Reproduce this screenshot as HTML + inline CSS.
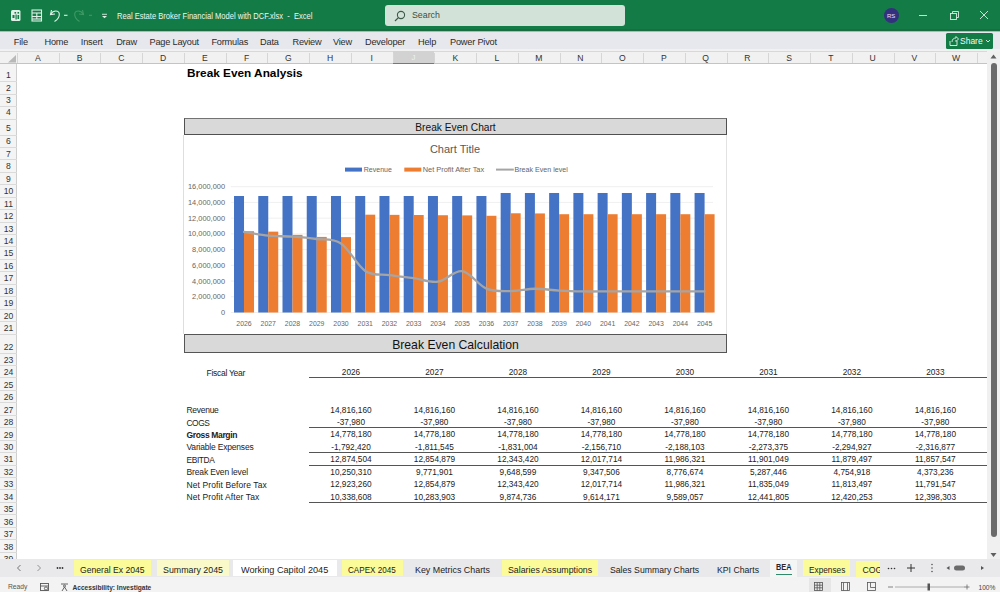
<!DOCTYPE html><html><head><meta charset="utf-8"><title>Excel</title><style>
*{box-sizing:border-box;margin:0;padding:0}
html,body{width:1000px;height:592px;overflow:hidden;background:#fff;font-family:"Liberation Sans", sans-serif;position:relative}
.a{position:absolute;white-space:nowrap}
.t{position:absolute;white-space:nowrap;line-height:1}
</style></head><body>
<div class="a" style="left:0;top:0;width:1000px;height:31px;background:#137b45"></div>
<svg class="a" style="left:0;top:0" width="120" height="31" viewBox="0 0 120 31">
<rect x="11" y="10" width="9.5" height="11" rx="1.5" fill="#dff0e6"/>
<rect x="14.5" y="12" width="1.6" height="1.6" fill="#137b45"/><rect x="17.5" y="12" width="1.6" height="1.6" fill="#137b45"/>
<rect x="12.5" y="15" width="2" height="3" fill="#137b45"/><rect x="15.5" y="14.5" width="1.2" height="5" fill="#137b45"/><rect x="17.5" y="15" width="1.6" height="4" fill="#137b45"/>
<g fill="none" stroke="#dff0e6" stroke-width="1.1">
<rect x="32" y="10" width="9.5" height="11"/>
<line x1="32" y1="13" x2="41.5" y2="13"/><line x1="32" y1="16.5" x2="41.5" y2="16.5"/><line x1="32" y1="19" x2="41.5" y2="19"/><line x1="36.8" y1="13" x2="36.8" y2="19"/>
<path d="M51.5 10 L50.5 14.5 L55 14"/><path d="M51 14 C53 10 59 10 59.3 14 C59.5 17 57 20 54.5 21.5"/>
<line x1="64" y1="15.3" x2="67.5" y2="15.3"/>
</g>
<g fill="none" stroke="#3d9a66" stroke-width="1.1">
<path d="M82.5 10 L83.5 14.5 L79 14"/><path d="M83 14 C81 10 75 10 74.7 14 C74.5 17 77 20 79.5 21.5"/>
<line x1="89" y1="15.3" x2="92" y2="15.3"/>
</g>
<g fill="#dff0e6"><rect x="102" y="13.8" width="5" height="0.9"/><path d="M102 16 L107 16 L104.5 18.3 Z"/></g>
</svg>
<div class="t" style="left:116.5px;top:11.5px;font-size:8.8px;color:#eef6f1;transform:scaleX(0.86);transform-origin:0 0">Real Estate Broker Financial Model with DCF.xlsx &nbsp;- &nbsp;Excel</div>
<div class="a" style="left:385px;top:5px;width:240px;height:21px;background:#d3e2d8;border-radius:3px"></div>
<svg class="a" style="left:393px;top:9px" width="14" height="14" viewBox="0 0 14 14"><circle cx="8" cy="6" r="3.6" fill="none" stroke="#3c5a48" stroke-width="1.1"/><line x1="5.4" y1="8.6" x2="2" y2="12" stroke="#3c5a48" stroke-width="1.2"/></svg>
<div class="t" style="left:412px;top:11px;font-size:8.8px;color:#3a4f42">Search</div>
<div class="a" style="left:884px;top:8px;width:15px;height:15px;border-radius:50%;background:#33307f"></div>
<div class="t" style="left:887px;top:12.5px;font-size:6px;color:#e6e0ff">RS</div>
<svg class="a" style="left:910px;top:0" width="90" height="31" viewBox="0 0 90 31">
<g fill="none" stroke="#d9ebe0" stroke-width="0.9">
<line x1="9" y1="15.5" x2="17" y2="15.5"/>
<rect x="40.5" y="13.5" width="6" height="6"/><path d="M42.5 13.5 V11.5 H48.5 V17.5 H46.5"/>
<line x1="70" y1="11" x2="78" y2="19"/><line x1="78" y1="11" x2="70" y2="19"/>
</g></svg>
<div class="a" style="left:0;top:29px;width:1000px;height:2px;background:#1d6b40"></div>
<div class="a" style="left:0;top:31px;width:1000px;height:18px;background:#e7e8ed"></div>
<div class="a" style="left:0;top:30.6px;width:1000px;height:1px;background:#8fcca4"></div>
<div class="t" style="left:13.8px;top:37.5px;width:12.2px;font-size:9.2px;color:#2b2b2b;text-align:center;letter-spacing:-0.2px">File</div>
<div class="t" style="left:44.5px;top:37.5px;width:23.5px;font-size:9.2px;color:#2b2b2b;text-align:center;letter-spacing:-0.2px">Home</div>
<div class="t" style="left:80.5px;top:37.5px;width:22.5px;font-size:9.2px;color:#2b2b2b;text-align:center;letter-spacing:-0.2px">Insert</div>
<div class="t" style="left:116px;top:37.5px;width:21px;font-size:9.2px;color:#2b2b2b;text-align:center;letter-spacing:-0.2px">Draw</div>
<div class="t" style="left:149.5px;top:37.5px;width:48.5px;font-size:9.2px;color:#2b2b2b;text-align:center;letter-spacing:-0.2px">Page Layout</div>
<div class="t" style="left:211.4px;top:37.5px;width:36.0px;font-size:9.2px;color:#2b2b2b;text-align:center;letter-spacing:-0.2px">Formulas</div>
<div class="t" style="left:260px;top:37.5px;width:18.69999999999999px;font-size:9.2px;color:#2b2b2b;text-align:center;letter-spacing:-0.2px">Data</div>
<div class="t" style="left:292.5px;top:37.5px;width:27.0px;font-size:9.2px;color:#2b2b2b;text-align:center;letter-spacing:-0.2px">Review</div>
<div class="t" style="left:333px;top:37.5px;width:18.600000000000023px;font-size:9.2px;color:#2b2b2b;text-align:center;letter-spacing:-0.2px">View</div>
<div class="t" style="left:365px;top:37.5px;width:39.80000000000001px;font-size:9.2px;color:#2b2b2b;text-align:center;letter-spacing:-0.2px">Developer</div>
<div class="t" style="left:418px;top:37.5px;width:17.69999999999999px;font-size:9.2px;color:#2b2b2b;text-align:center;letter-spacing:-0.2px">Help</div>
<div class="t" style="left:450px;top:37.5px;width:45.80000000000001px;font-size:9.2px;color:#2b2b2b;text-align:center;letter-spacing:-0.2px">Power Pivot</div>
<div class="a" style="left:946px;top:33px;width:47px;height:16px;background:#137b45;border-radius:1.5px"></div>
<svg class="a" style="left:946px;top:33px" width="47" height="16" viewBox="0 0 47 16"><g fill="none" stroke="#e8f2ec" stroke-width="0.9"><path d="M4 8 V12.5 H11 V8"/><path d="M6 9 C6 6 8 5 10 5 L10 3.5 L12.5 6 L10 8.5 L10 7"/><path d="M40 7 L42 9 L44 7"/></g></svg>
<div class="t" style="left:960px;top:37px;font-size:8.5px;color:#f4faf6">Share</div>
<div class="a" style="left:0;top:49px;width:1000px;height:15px;background:#f1f1f1;border-bottom:1px solid #c4c4c4"></div>
<div class="a" style="left:0;top:50.5px;width:1000px;height:1px;background:#d8d8da"></div>
<svg class="a" style="left:0;top:51px" width="17" height="12"><path d="M8 11.5 L16 11.5 L16 4 Z" fill="#b8b8b8"/></svg>
<div class="t" style="left:17.00px;top:53.6px;width:41.74px;text-align:center;font-size:8.6px;color:#333">A</div>
<div class="a" style="left:17.00px;top:53px;width:1px;height:10px;background:#d6d6d6"></div>
<div class="t" style="left:58.74px;top:53.6px;width:41.74px;text-align:center;font-size:8.6px;color:#333">B</div>
<div class="a" style="left:58.74px;top:53px;width:1px;height:10px;background:#d6d6d6"></div>
<div class="t" style="left:100.48px;top:53.6px;width:41.74px;text-align:center;font-size:8.6px;color:#333">C</div>
<div class="a" style="left:100.48px;top:53px;width:1px;height:10px;background:#d6d6d6"></div>
<div class="t" style="left:142.22px;top:53.6px;width:41.74px;text-align:center;font-size:8.6px;color:#333">D</div>
<div class="a" style="left:142.22px;top:53px;width:1px;height:10px;background:#d6d6d6"></div>
<div class="t" style="left:183.96px;top:53.6px;width:41.74px;text-align:center;font-size:8.6px;color:#333">E</div>
<div class="a" style="left:183.96px;top:53px;width:1px;height:10px;background:#d6d6d6"></div>
<div class="t" style="left:225.70px;top:53.6px;width:41.74px;text-align:center;font-size:8.6px;color:#333">F</div>
<div class="a" style="left:225.70px;top:53px;width:1px;height:10px;background:#d6d6d6"></div>
<div class="t" style="left:267.44px;top:53.6px;width:41.74px;text-align:center;font-size:8.6px;color:#333">G</div>
<div class="a" style="left:267.44px;top:53px;width:1px;height:10px;background:#d6d6d6"></div>
<div class="t" style="left:309.18px;top:53.6px;width:41.74px;text-align:center;font-size:8.6px;color:#333">H</div>
<div class="a" style="left:309.18px;top:53px;width:1px;height:10px;background:#d6d6d6"></div>
<div class="t" style="left:350.92px;top:53.6px;width:41.74px;text-align:center;font-size:8.6px;color:#333">I</div>
<div class="a" style="left:350.92px;top:53px;width:1px;height:10px;background:#d6d6d6"></div>
<div class="a" style="left:392.66px;top:51px;width:41.74px;height:13px;background:#d2d2d2;border-bottom:1.5px solid #3f9a62"></div>
<div class="t" style="left:392.66px;top:53.5px;width:41.74px;text-align:center;font-size:7.8px;color:#e9f3ec">J</div>
<div class="a" style="left:392.66px;top:53px;width:1px;height:10px;background:#d6d6d6"></div>
<div class="t" style="left:434.40px;top:53.6px;width:41.74px;text-align:center;font-size:8.6px;color:#333">K</div>
<div class="a" style="left:434.40px;top:53px;width:1px;height:10px;background:#d6d6d6"></div>
<div class="t" style="left:476.14px;top:53.6px;width:41.74px;text-align:center;font-size:8.6px;color:#333">L</div>
<div class="a" style="left:476.14px;top:53px;width:1px;height:10px;background:#d6d6d6"></div>
<div class="t" style="left:517.88px;top:53.6px;width:41.74px;text-align:center;font-size:8.6px;color:#333">M</div>
<div class="a" style="left:517.88px;top:53px;width:1px;height:10px;background:#d6d6d6"></div>
<div class="t" style="left:559.62px;top:53.6px;width:41.74px;text-align:center;font-size:8.6px;color:#333">N</div>
<div class="a" style="left:559.62px;top:53px;width:1px;height:10px;background:#d6d6d6"></div>
<div class="t" style="left:601.36px;top:53.6px;width:41.74px;text-align:center;font-size:8.6px;color:#333">O</div>
<div class="a" style="left:601.36px;top:53px;width:1px;height:10px;background:#d6d6d6"></div>
<div class="t" style="left:643.10px;top:53.6px;width:41.74px;text-align:center;font-size:8.6px;color:#333">P</div>
<div class="a" style="left:643.10px;top:53px;width:1px;height:10px;background:#d6d6d6"></div>
<div class="t" style="left:684.84px;top:53.6px;width:41.74px;text-align:center;font-size:8.6px;color:#333">Q</div>
<div class="a" style="left:684.84px;top:53px;width:1px;height:10px;background:#d6d6d6"></div>
<div class="t" style="left:726.58px;top:53.6px;width:41.74px;text-align:center;font-size:8.6px;color:#333">R</div>
<div class="a" style="left:726.58px;top:53px;width:1px;height:10px;background:#d6d6d6"></div>
<div class="t" style="left:768.32px;top:53.6px;width:41.74px;text-align:center;font-size:8.6px;color:#333">S</div>
<div class="a" style="left:768.32px;top:53px;width:1px;height:10px;background:#d6d6d6"></div>
<div class="t" style="left:810.06px;top:53.6px;width:41.74px;text-align:center;font-size:8.6px;color:#333">T</div>
<div class="a" style="left:810.06px;top:53px;width:1px;height:10px;background:#d6d6d6"></div>
<div class="t" style="left:851.80px;top:53.6px;width:41.74px;text-align:center;font-size:8.6px;color:#333">U</div>
<div class="a" style="left:851.80px;top:53px;width:1px;height:10px;background:#d6d6d6"></div>
<div class="t" style="left:893.54px;top:53.6px;width:41.74px;text-align:center;font-size:8.6px;color:#333">V</div>
<div class="a" style="left:893.54px;top:53px;width:1px;height:10px;background:#d6d6d6"></div>
<div class="t" style="left:935.28px;top:53.6px;width:41.74px;text-align:center;font-size:8.6px;color:#333">W</div>
<div class="a" style="left:935.28px;top:53px;width:1px;height:10px;background:#d6d6d6"></div>
<div class="a" style="left:977.02px;top:53px;width:1px;height:10px;background:#d6d6d6"></div>
<div class="a" style="left:0;top:64px;width:17px;height:495px;background:#f4f4f4;border-right:1px solid #cfcfcf"></div>
<div class="t" style="left:0;top:71.00px;width:17px;text-align:center;font-size:8.6px;color:#333">1</div>
<div class="a" style="left:0;top:80.50px;width:17px;height:1px;background:#dadada"></div>
<div class="t" style="left:0;top:83.60px;width:17px;text-align:center;font-size:8.6px;color:#333">2</div>
<div class="a" style="left:0;top:94.00px;width:17px;height:1px;background:#dadada"></div>
<div class="t" style="left:0;top:95.60px;width:17px;text-align:center;font-size:8.6px;color:#333">3</div>
<div class="a" style="left:0;top:106.00px;width:17px;height:1px;background:#dadada"></div>
<div class="t" style="left:0;top:108.10px;width:17px;text-align:center;font-size:8.6px;color:#333">4</div>
<div class="a" style="left:0;top:118.50px;width:17px;height:1px;background:#dadada"></div>
<div class="t" style="left:0;top:124.10px;width:17px;text-align:center;font-size:8.6px;color:#333">5</div>
<div class="a" style="left:0;top:134.50px;width:17px;height:1px;background:#dadada"></div>
<div class="t" style="left:0;top:137.40px;width:17px;text-align:center;font-size:8.6px;color:#333">6</div>
<div class="a" style="left:0;top:146.80px;width:17px;height:1px;background:#dadada"></div>
<div class="t" style="left:0;top:149.85px;width:17px;text-align:center;font-size:8.6px;color:#333">7</div>
<div class="a" style="left:0;top:159.25px;width:17px;height:1px;background:#dadada"></div>
<div class="t" style="left:0;top:162.30px;width:17px;text-align:center;font-size:8.6px;color:#333">8</div>
<div class="a" style="left:0;top:171.70px;width:17px;height:1px;background:#dadada"></div>
<div class="t" style="left:0;top:174.75px;width:17px;text-align:center;font-size:8.6px;color:#333">9</div>
<div class="a" style="left:0;top:184.15px;width:17px;height:1px;background:#dadada"></div>
<div class="t" style="left:0;top:187.20px;width:17px;text-align:center;font-size:8.6px;color:#333">10</div>
<div class="a" style="left:0;top:196.60px;width:17px;height:1px;background:#dadada"></div>
<div class="t" style="left:0;top:199.65px;width:17px;text-align:center;font-size:8.6px;color:#333">11</div>
<div class="a" style="left:0;top:209.05px;width:17px;height:1px;background:#dadada"></div>
<div class="t" style="left:0;top:212.10px;width:17px;text-align:center;font-size:8.6px;color:#333">12</div>
<div class="a" style="left:0;top:221.50px;width:17px;height:1px;background:#dadada"></div>
<div class="t" style="left:0;top:224.55px;width:17px;text-align:center;font-size:8.6px;color:#333">13</div>
<div class="a" style="left:0;top:233.95px;width:17px;height:1px;background:#dadada"></div>
<div class="t" style="left:0;top:237.00px;width:17px;text-align:center;font-size:8.6px;color:#333">14</div>
<div class="a" style="left:0;top:246.40px;width:17px;height:1px;background:#dadada"></div>
<div class="t" style="left:0;top:249.45px;width:17px;text-align:center;font-size:8.6px;color:#333">15</div>
<div class="a" style="left:0;top:258.85px;width:17px;height:1px;background:#dadada"></div>
<div class="t" style="left:0;top:261.90px;width:17px;text-align:center;font-size:8.6px;color:#333">16</div>
<div class="a" style="left:0;top:271.30px;width:17px;height:1px;background:#dadada"></div>
<div class="t" style="left:0;top:274.35px;width:17px;text-align:center;font-size:8.6px;color:#333">17</div>
<div class="a" style="left:0;top:283.75px;width:17px;height:1px;background:#dadada"></div>
<div class="t" style="left:0;top:286.80px;width:17px;text-align:center;font-size:8.6px;color:#333">18</div>
<div class="a" style="left:0;top:296.20px;width:17px;height:1px;background:#dadada"></div>
<div class="t" style="left:0;top:299.25px;width:17px;text-align:center;font-size:8.6px;color:#333">19</div>
<div class="a" style="left:0;top:308.65px;width:17px;height:1px;background:#dadada"></div>
<div class="t" style="left:0;top:311.70px;width:17px;text-align:center;font-size:8.6px;color:#333">20</div>
<div class="a" style="left:0;top:321.10px;width:17px;height:1px;background:#dadada"></div>
<div class="t" style="left:0;top:324.10px;width:17px;text-align:center;font-size:8.6px;color:#333">21</div>
<div class="a" style="left:0;top:333.50px;width:17px;height:1px;background:#dadada"></div>
<div class="t" style="left:0;top:343.10px;width:17px;text-align:center;font-size:8.6px;color:#333">22</div>
<div class="a" style="left:0;top:352.50px;width:17px;height:1px;background:#dadada"></div>
<div class="t" style="left:0;top:355.85px;width:17px;text-align:center;font-size:8.6px;color:#333">23</div>
<div class="a" style="left:0;top:364.95px;width:17px;height:1px;background:#dadada"></div>
<div class="t" style="left:0;top:368.30px;width:17px;text-align:center;font-size:8.6px;color:#333">24</div>
<div class="a" style="left:0;top:377.40px;width:17px;height:1px;background:#dadada"></div>
<div class="t" style="left:0;top:380.75px;width:17px;text-align:center;font-size:8.6px;color:#333">25</div>
<div class="a" style="left:0;top:389.85px;width:17px;height:1px;background:#dadada"></div>
<div class="t" style="left:0;top:393.20px;width:17px;text-align:center;font-size:8.6px;color:#333">26</div>
<div class="a" style="left:0;top:402.30px;width:17px;height:1px;background:#dadada"></div>
<div class="t" style="left:0;top:405.65px;width:17px;text-align:center;font-size:8.6px;color:#333">27</div>
<div class="a" style="left:0;top:414.75px;width:17px;height:1px;background:#dadada"></div>
<div class="t" style="left:0;top:418.10px;width:17px;text-align:center;font-size:8.6px;color:#333">28</div>
<div class="a" style="left:0;top:427.20px;width:17px;height:1px;background:#dadada"></div>
<div class="t" style="left:0;top:430.55px;width:17px;text-align:center;font-size:8.6px;color:#333">29</div>
<div class="a" style="left:0;top:439.65px;width:17px;height:1px;background:#dadada"></div>
<div class="t" style="left:0;top:443.00px;width:17px;text-align:center;font-size:8.6px;color:#333">30</div>
<div class="a" style="left:0;top:452.10px;width:17px;height:1px;background:#dadada"></div>
<div class="t" style="left:0;top:455.45px;width:17px;text-align:center;font-size:8.6px;color:#333">31</div>
<div class="a" style="left:0;top:464.55px;width:17px;height:1px;background:#dadada"></div>
<div class="t" style="left:0;top:467.90px;width:17px;text-align:center;font-size:8.6px;color:#333">32</div>
<div class="a" style="left:0;top:477.00px;width:17px;height:1px;background:#dadada"></div>
<div class="t" style="left:0;top:480.35px;width:17px;text-align:center;font-size:8.6px;color:#333">33</div>
<div class="a" style="left:0;top:489.45px;width:17px;height:1px;background:#dadada"></div>
<div class="t" style="left:0;top:492.80px;width:17px;text-align:center;font-size:8.6px;color:#333">34</div>
<div class="a" style="left:0;top:501.90px;width:17px;height:1px;background:#dadada"></div>
<div class="t" style="left:0;top:505.25px;width:17px;text-align:center;font-size:8.6px;color:#333">35</div>
<div class="a" style="left:0;top:514.35px;width:17px;height:1px;background:#dadada"></div>
<div class="t" style="left:0;top:517.70px;width:17px;text-align:center;font-size:8.6px;color:#333">36</div>
<div class="a" style="left:0;top:526.80px;width:17px;height:1px;background:#dadada"></div>
<div class="t" style="left:0;top:530.15px;width:17px;text-align:center;font-size:8.6px;color:#333">37</div>
<div class="a" style="left:0;top:539.25px;width:17px;height:1px;background:#dadada"></div>
<div class="t" style="left:0;top:542.60px;width:17px;text-align:center;font-size:8.6px;color:#333">38</div>
<div class="a" style="left:0;top:551.70px;width:17px;height:1px;background:#dadada"></div>
<div class="t" style="left:0;top:555.05px;width:17px;text-align:center;font-size:8.6px;color:#333">39</div>
<div class="t" style="left:187px;top:68px;font-size:11.8px;font-weight:bold;color:#000">Break Even Analysis</div>
<div class="a" style="left:184px;top:118.2px;width:543px;height:16.9px;background:#d9d9d9;border:1px solid #505050;border-top:1.6px solid #737373;border-bottom-width:1.3px"></div>
<div class="t" style="left:184px;top:122.7px;width:543px;text-align:center;font-size:10.2px;color:#111">Break Even Chart</div>
<div class="a" style="left:183.3px;top:135px;width:544px;height:199px;border-left:1px solid #dedede;border-right:1px solid #e2e2e2"></div>
<svg class="a" style="left:0;top:0" width="1000" height="592" viewBox="0 0 1000 592">
<line x1="230.9" y1="312.50" x2="713" y2="312.50" stroke="#ebebeb" stroke-width="0.8"/>
<text x="225" y="315.10" text-anchor="end" font-size="7.4" fill="#666" font-family='"Liberation Sans"'>0</text>
<line x1="230.9" y1="296.77" x2="713" y2="296.77" stroke="#ebebeb" stroke-width="0.8"/>
<text x="225" y="299.38" text-anchor="end" font-size="7.4" fill="#666" font-family='"Liberation Sans"'>2,000,000</text>
<line x1="230.9" y1="281.05" x2="713" y2="281.05" stroke="#ebebeb" stroke-width="0.8"/>
<text x="225" y="283.65" text-anchor="end" font-size="7.4" fill="#666" font-family='"Liberation Sans"'>4,000,000</text>
<line x1="230.9" y1="265.32" x2="713" y2="265.32" stroke="#ebebeb" stroke-width="0.8"/>
<text x="225" y="267.93" text-anchor="end" font-size="7.4" fill="#666" font-family='"Liberation Sans"'>6,000,000</text>
<line x1="230.9" y1="249.60" x2="713" y2="249.60" stroke="#ebebeb" stroke-width="0.8"/>
<text x="225" y="252.20" text-anchor="end" font-size="7.4" fill="#666" font-family='"Liberation Sans"'>8,000,000</text>
<line x1="230.9" y1="233.88" x2="713" y2="233.88" stroke="#ebebeb" stroke-width="0.8"/>
<text x="225" y="236.47" text-anchor="end" font-size="7.4" fill="#666" font-family='"Liberation Sans"'>10,000,000</text>
<line x1="230.9" y1="218.15" x2="713" y2="218.15" stroke="#ebebeb" stroke-width="0.8"/>
<text x="225" y="220.75" text-anchor="end" font-size="7.4" fill="#666" font-family='"Liberation Sans"'>12,000,000</text>
<line x1="230.9" y1="202.43" x2="713" y2="202.43" stroke="#ebebeb" stroke-width="0.8"/>
<text x="225" y="205.03" text-anchor="end" font-size="7.4" fill="#666" font-family='"Liberation Sans"'>14,000,000</text>
<line x1="230.9" y1="186.70" x2="713" y2="186.70" stroke="#ebebeb" stroke-width="0.8"/>
<text x="225" y="189.30" text-anchor="end" font-size="7.4" fill="#666" font-family='"Liberation Sans"'>16,000,000</text>
<rect x="234.02" y="196.01" width="10.0" height="116.49" fill="#4472c4"/>
<rect x="244.02" y="231.21" width="10.0" height="81.29" fill="#ed7d31"/>
<text x="244.02" y="326.10" text-anchor="middle" font-size="6.9" fill="#666" font-family='"Liberation Sans"'>2026</text>
<rect x="258.26" y="196.01" width="10.0" height="116.49" fill="#4472c4"/>
<rect x="268.26" y="231.64" width="10.0" height="80.86" fill="#ed7d31"/>
<text x="268.26" y="326.10" text-anchor="middle" font-size="6.9" fill="#666" font-family='"Liberation Sans"'>2027</text>
<rect x="282.50" y="196.01" width="10.0" height="116.49" fill="#4472c4"/>
<rect x="292.50" y="234.86" width="10.0" height="77.64" fill="#ed7d31"/>
<text x="292.50" y="326.10" text-anchor="middle" font-size="6.9" fill="#666" font-family='"Liberation Sans"'>2028</text>
<rect x="306.74" y="196.01" width="10.0" height="116.49" fill="#4472c4"/>
<rect x="316.74" y="236.91" width="10.0" height="75.59" fill="#ed7d31"/>
<text x="316.74" y="326.10" text-anchor="middle" font-size="6.9" fill="#666" font-family='"Liberation Sans"'>2029</text>
<rect x="330.98" y="196.01" width="10.0" height="116.49" fill="#4472c4"/>
<rect x="340.98" y="237.11" width="10.0" height="75.39" fill="#ed7d31"/>
<text x="340.98" y="326.10" text-anchor="middle" font-size="6.9" fill="#666" font-family='"Liberation Sans"'>2030</text>
<rect x="355.22" y="196.01" width="10.0" height="116.49" fill="#4472c4"/>
<rect x="365.22" y="214.68" width="10.0" height="97.82" fill="#ed7d31"/>
<text x="365.22" y="326.10" text-anchor="middle" font-size="6.9" fill="#666" font-family='"Liberation Sans"'>2031</text>
<rect x="379.46" y="196.01" width="10.0" height="116.49" fill="#4472c4"/>
<rect x="389.46" y="214.85" width="10.0" height="97.65" fill="#ed7d31"/>
<text x="389.46" y="326.10" text-anchor="middle" font-size="6.9" fill="#666" font-family='"Liberation Sans"'>2032</text>
<rect x="403.70" y="196.01" width="10.0" height="116.49" fill="#4472c4"/>
<rect x="413.70" y="215.02" width="10.0" height="97.48" fill="#ed7d31"/>
<text x="413.70" y="326.10" text-anchor="middle" font-size="6.9" fill="#666" font-family='"Liberation Sans"'>2033</text>
<rect x="427.94" y="196.01" width="10.0" height="116.49" fill="#4472c4"/>
<rect x="437.94" y="215.24" width="10.0" height="97.26" fill="#ed7d31"/>
<text x="437.94" y="326.10" text-anchor="middle" font-size="6.9" fill="#666" font-family='"Liberation Sans"'>2034</text>
<rect x="452.18" y="196.01" width="10.0" height="116.49" fill="#4472c4"/>
<rect x="462.18" y="215.40" width="10.0" height="97.10" fill="#ed7d31"/>
<text x="462.18" y="326.10" text-anchor="middle" font-size="6.9" fill="#666" font-family='"Liberation Sans"'>2035</text>
<rect x="476.42" y="196.01" width="10.0" height="116.49" fill="#4472c4"/>
<rect x="486.42" y="215.79" width="10.0" height="96.71" fill="#ed7d31"/>
<text x="486.42" y="326.10" text-anchor="middle" font-size="6.9" fill="#666" font-family='"Liberation Sans"'>2036</text>
<rect x="500.66" y="192.99" width="10.0" height="119.51" fill="#4472c4"/>
<rect x="510.66" y="213.28" width="10.0" height="99.22" fill="#ed7d31"/>
<text x="510.66" y="326.10" text-anchor="middle" font-size="6.9" fill="#666" font-family='"Liberation Sans"'>2037</text>
<rect x="524.90" y="192.99" width="10.0" height="119.51" fill="#4472c4"/>
<rect x="534.90" y="213.43" width="10.0" height="99.07" fill="#ed7d31"/>
<text x="534.90" y="326.10" text-anchor="middle" font-size="6.9" fill="#666" font-family='"Liberation Sans"'>2038</text>
<rect x="549.14" y="192.99" width="10.0" height="119.51" fill="#4472c4"/>
<rect x="559.14" y="214.22" width="10.0" height="98.28" fill="#ed7d31"/>
<text x="559.14" y="326.10" text-anchor="middle" font-size="6.9" fill="#666" font-family='"Liberation Sans"'>2039</text>
<rect x="573.38" y="192.99" width="10.0" height="119.51" fill="#4472c4"/>
<rect x="583.38" y="214.22" width="10.0" height="98.28" fill="#ed7d31"/>
<text x="583.38" y="326.10" text-anchor="middle" font-size="6.9" fill="#666" font-family='"Liberation Sans"'>2040</text>
<rect x="597.62" y="192.99" width="10.0" height="119.51" fill="#4472c4"/>
<rect x="607.62" y="214.22" width="10.0" height="98.28" fill="#ed7d31"/>
<text x="607.62" y="326.10" text-anchor="middle" font-size="6.9" fill="#666" font-family='"Liberation Sans"'>2041</text>
<rect x="621.86" y="192.99" width="10.0" height="119.51" fill="#4472c4"/>
<rect x="631.86" y="214.22" width="10.0" height="98.28" fill="#ed7d31"/>
<text x="631.86" y="326.10" text-anchor="middle" font-size="6.9" fill="#666" font-family='"Liberation Sans"'>2042</text>
<rect x="646.10" y="192.99" width="10.0" height="119.51" fill="#4472c4"/>
<rect x="656.10" y="214.22" width="10.0" height="98.28" fill="#ed7d31"/>
<text x="656.10" y="326.10" text-anchor="middle" font-size="6.9" fill="#666" font-family='"Liberation Sans"'>2043</text>
<rect x="670.34" y="192.99" width="10.0" height="119.51" fill="#4472c4"/>
<rect x="680.34" y="214.22" width="10.0" height="98.28" fill="#ed7d31"/>
<text x="680.34" y="326.10" text-anchor="middle" font-size="6.9" fill="#666" font-family='"Liberation Sans"'>2044</text>
<rect x="694.58" y="192.99" width="10.0" height="119.51" fill="#4472c4"/>
<rect x="704.58" y="214.22" width="10.0" height="98.28" fill="#ed7d31"/>
<text x="704.58" y="326.10" text-anchor="middle" font-size="6.9" fill="#666" font-family='"Liberation Sans"'>2045</text>
<path d="M244.02,231.91 C248.06,232.53 260.18,234.88 268.26,235.67 C276.34,236.46 284.42,236.08 292.50,236.64 C300.58,237.19 308.66,237.86 316.74,239.01 C324.82,240.15 332.90,238.17 340.98,243.49 C349.06,248.81 357.14,265.66 365.22,270.93 C373.30,276.20 381.38,273.92 389.46,275.11 C397.54,276.31 405.62,277.02 413.70,278.12 C421.78,279.21 429.86,282.84 437.94,281.68 C446.02,280.52 454.10,269.99 462.18,271.14 C470.26,272.30 478.34,285.27 486.42,288.60 C494.50,291.93 502.58,291.09 510.66,291.11 C518.74,291.14 526.82,288.83 534.90,288.76 C542.98,288.68 551.06,290.20 559.14,290.64 C567.22,291.09 575.30,291.30 583.38,291.43 C591.46,291.56 599.54,291.43 607.62,291.43 C615.70,291.43 623.78,291.43 631.86,291.43 C639.94,291.43 648.02,291.43 656.10,291.43 C664.18,291.43 672.26,291.43 680.34,291.43 C688.42,291.43 700.54,291.43 704.58,291.43" fill="none" stroke="#a5a5a5" stroke-width="2.3" stroke-linecap="round" stroke-linejoin="round"/>
<text x="455" y="153.4" text-anchor="middle" font-size="11" fill="#595959" font-family='"Liberation Sans"'>Chart Title</text>
<rect x="345" y="167.6" width="17" height="4" fill="#4472c4"/>
<text x="363.8" y="172" font-size="7" fill="#666" font-family='"Liberation Sans"'>Revenue</text>
<rect x="404.3" y="167.6" width="17" height="4" fill="#ed7d31"/>
<text x="422.7" y="172" font-size="7.4" fill="#666" font-family='"Liberation Sans"'>Net Profit After Tax</text>
<line x1="496" y1="169.6" x2="513.8" y2="169.6" stroke="#a5a5a5" stroke-width="2"/>
<text x="514.5" y="172" font-size="7.1" fill="#666" font-family='"Liberation Sans"'>Break Even level</text>
</svg>
<div class="a" style="left:184px;top:334px;width:543px;height:19px;background:#d9d9d9;border:1px solid #555;border-top-width:1.3px;border-bottom-width:1.3px"></div>
<div class="t" style="left:184px;top:339px;width:543px;text-align:center;font-size:12.2px;color:#111">Break Even Calculation</div>
<div class="t" style="left:206.5px;top:368.88px;font-size:8.5px;letter-spacing:-0.276px;color:#222">Fiscal Year</div>
<div class="t" style="left:311.00px;top:369.37px;width:80px;text-align:center;font-size:8.25px;color:#222">2026</div>
<div class="t" style="left:394.48px;top:369.37px;width:80px;text-align:center;font-size:8.25px;color:#222">2027</div>
<div class="t" style="left:477.96px;top:369.37px;width:80px;text-align:center;font-size:8.25px;color:#222">2028</div>
<div class="t" style="left:561.44px;top:369.37px;width:80px;text-align:center;font-size:8.25px;color:#222">2029</div>
<div class="t" style="left:644.92px;top:369.37px;width:80px;text-align:center;font-size:8.25px;color:#222">2030</div>
<div class="t" style="left:728.40px;top:369.37px;width:80px;text-align:center;font-size:8.25px;color:#222">2031</div>
<div class="t" style="left:811.88px;top:369.37px;width:80px;text-align:center;font-size:8.25px;color:#222">2032</div>
<div class="t" style="left:895.36px;top:369.37px;width:80px;text-align:center;font-size:8.25px;color:#222">2033</div>
<div class="t" style="left:186.5px;top:406.13px;font-size:8.50px;letter-spacing:-0.289px;font-weight:normal;color:#222">Revenue</div>
<div class="t" style="left:311.00px;top:406.52px;width:80px;text-align:center;font-size:8.25px;color:#222">14,816,160</div>
<div class="t" style="left:394.48px;top:406.52px;width:80px;text-align:center;font-size:8.25px;color:#222">14,816,160</div>
<div class="t" style="left:477.96px;top:406.52px;width:80px;text-align:center;font-size:8.25px;color:#222">14,816,160</div>
<div class="t" style="left:561.44px;top:406.52px;width:80px;text-align:center;font-size:8.25px;color:#222">14,816,160</div>
<div class="t" style="left:644.92px;top:406.52px;width:80px;text-align:center;font-size:8.25px;color:#222">14,816,160</div>
<div class="t" style="left:728.40px;top:406.52px;width:80px;text-align:center;font-size:8.25px;color:#222">14,816,160</div>
<div class="t" style="left:811.88px;top:406.52px;width:80px;text-align:center;font-size:8.25px;color:#222">14,816,160</div>
<div class="t" style="left:895.36px;top:406.52px;width:80px;text-align:center;font-size:8.25px;color:#222">14,816,160</div>
<div class="t" style="left:186.5px;top:418.66px;font-size:8.40px;letter-spacing:-0.434px;font-weight:normal;color:#222">COGS</div>
<div class="t" style="left:311.00px;top:418.97px;width:80px;text-align:center;font-size:8.25px;color:#222">-37,980</div>
<div class="t" style="left:394.48px;top:418.97px;width:80px;text-align:center;font-size:8.25px;color:#222">-37,980</div>
<div class="t" style="left:477.96px;top:418.97px;width:80px;text-align:center;font-size:8.25px;color:#222">-37,980</div>
<div class="t" style="left:561.44px;top:418.97px;width:80px;text-align:center;font-size:8.25px;color:#222">-37,980</div>
<div class="t" style="left:644.92px;top:418.97px;width:80px;text-align:center;font-size:8.25px;color:#222">-37,980</div>
<div class="t" style="left:728.40px;top:418.97px;width:80px;text-align:center;font-size:8.25px;color:#222">-37,980</div>
<div class="t" style="left:811.88px;top:418.97px;width:80px;text-align:center;font-size:8.25px;color:#222">-37,980</div>
<div class="t" style="left:895.36px;top:418.97px;width:80px;text-align:center;font-size:8.25px;color:#222">-37,980</div>
<div class="t" style="left:186.5px;top:431.03px;font-size:8.50px;letter-spacing:-0.357px;font-weight:bold;color:#222">Gross Margin</div>
<div class="t" style="left:311.00px;top:431.42px;width:80px;text-align:center;font-size:8.25px;color:#222">14,778,180</div>
<div class="t" style="left:394.48px;top:431.42px;width:80px;text-align:center;font-size:8.25px;color:#222">14,778,180</div>
<div class="t" style="left:477.96px;top:431.42px;width:80px;text-align:center;font-size:8.25px;color:#222">14,778,180</div>
<div class="t" style="left:561.44px;top:431.42px;width:80px;text-align:center;font-size:8.25px;color:#222">14,778,180</div>
<div class="t" style="left:644.92px;top:431.42px;width:80px;text-align:center;font-size:8.25px;color:#222">14,778,180</div>
<div class="t" style="left:728.40px;top:431.42px;width:80px;text-align:center;font-size:8.25px;color:#222">14,778,180</div>
<div class="t" style="left:811.88px;top:431.42px;width:80px;text-align:center;font-size:8.25px;color:#222">14,778,180</div>
<div class="t" style="left:895.36px;top:431.42px;width:80px;text-align:center;font-size:8.25px;color:#222">14,778,180</div>
<div class="t" style="left:186.5px;top:443.48px;font-size:8.50px;letter-spacing:-0.191px;font-weight:normal;color:#222">Variable Expenses</div>
<div class="t" style="left:311.00px;top:443.87px;width:80px;text-align:center;font-size:8.25px;color:#222">-1,792,420</div>
<div class="t" style="left:394.48px;top:443.87px;width:80px;text-align:center;font-size:8.25px;color:#222">-1,811,545</div>
<div class="t" style="left:477.96px;top:443.87px;width:80px;text-align:center;font-size:8.25px;color:#222">-1,831,004</div>
<div class="t" style="left:561.44px;top:443.87px;width:80px;text-align:center;font-size:8.25px;color:#222">-2,156,710</div>
<div class="t" style="left:644.92px;top:443.87px;width:80px;text-align:center;font-size:8.25px;color:#222">-2,188,103</div>
<div class="t" style="left:728.40px;top:443.87px;width:80px;text-align:center;font-size:8.25px;color:#222">-2,273,375</div>
<div class="t" style="left:811.88px;top:443.87px;width:80px;text-align:center;font-size:8.25px;color:#222">-2,294,927</div>
<div class="t" style="left:895.36px;top:443.87px;width:80px;text-align:center;font-size:8.25px;color:#222">-2,316,877</div>
<div class="t" style="left:186.5px;top:456.01px;font-size:8.40px;letter-spacing:-0.390px;font-weight:normal;color:#222">EBITDA</div>
<div class="t" style="left:311.00px;top:456.32px;width:80px;text-align:center;font-size:8.25px;color:#222">12,874,504</div>
<div class="t" style="left:394.48px;top:456.32px;width:80px;text-align:center;font-size:8.25px;color:#222">12,854,879</div>
<div class="t" style="left:477.96px;top:456.32px;width:80px;text-align:center;font-size:8.25px;color:#222">12,343,420</div>
<div class="t" style="left:561.44px;top:456.32px;width:80px;text-align:center;font-size:8.25px;color:#222">12,017,714</div>
<div class="t" style="left:644.92px;top:456.32px;width:80px;text-align:center;font-size:8.25px;color:#222">11,986,321</div>
<div class="t" style="left:728.40px;top:456.32px;width:80px;text-align:center;font-size:8.25px;color:#222">11,901,049</div>
<div class="t" style="left:811.88px;top:456.32px;width:80px;text-align:center;font-size:8.25px;color:#222">11,879,497</div>
<div class="t" style="left:895.36px;top:456.32px;width:80px;text-align:center;font-size:8.25px;color:#222">11,857,547</div>
<div class="t" style="left:186.5px;top:468.38px;font-size:8.50px;letter-spacing:-0.143px;font-weight:normal;color:#222">Break Even level</div>
<div class="t" style="left:311.00px;top:468.77px;width:80px;text-align:center;font-size:8.25px;color:#222">10,250,310</div>
<div class="t" style="left:394.48px;top:468.77px;width:80px;text-align:center;font-size:8.25px;color:#222">9,771,901</div>
<div class="t" style="left:477.96px;top:468.77px;width:80px;text-align:center;font-size:8.25px;color:#222">9,648,599</div>
<div class="t" style="left:561.44px;top:468.77px;width:80px;text-align:center;font-size:8.25px;color:#222">9,347,506</div>
<div class="t" style="left:644.92px;top:468.77px;width:80px;text-align:center;font-size:8.25px;color:#222">8,776,674</div>
<div class="t" style="left:728.40px;top:468.77px;width:80px;text-align:center;font-size:8.25px;color:#222">5,287,446</div>
<div class="t" style="left:811.88px;top:468.77px;width:80px;text-align:center;font-size:8.25px;color:#222">4,754,918</div>
<div class="t" style="left:895.36px;top:468.77px;width:80px;text-align:center;font-size:8.25px;color:#222">4,373,236</div>
<div class="t" style="left:186.5px;top:480.83px;font-size:8.50px;letter-spacing:0.099px;font-weight:normal;color:#222">Net Profit Before Tax</div>
<div class="t" style="left:311.00px;top:481.22px;width:80px;text-align:center;font-size:8.25px;color:#222">12,923,260</div>
<div class="t" style="left:394.48px;top:481.22px;width:80px;text-align:center;font-size:8.25px;color:#222">12,854,879</div>
<div class="t" style="left:477.96px;top:481.22px;width:80px;text-align:center;font-size:8.25px;color:#222">12,343,420</div>
<div class="t" style="left:561.44px;top:481.22px;width:80px;text-align:center;font-size:8.25px;color:#222">12,017,714</div>
<div class="t" style="left:644.92px;top:481.22px;width:80px;text-align:center;font-size:8.25px;color:#222">11,986,321</div>
<div class="t" style="left:728.40px;top:481.22px;width:80px;text-align:center;font-size:8.25px;color:#222">11,835,049</div>
<div class="t" style="left:811.88px;top:481.22px;width:80px;text-align:center;font-size:8.25px;color:#222">11,813,497</div>
<div class="t" style="left:895.36px;top:481.22px;width:80px;text-align:center;font-size:8.25px;color:#222">11,791,547</div>
<div class="t" style="left:186.5px;top:493.28px;font-size:8.50px;letter-spacing:0.109px;font-weight:normal;color:#222">Net Profit After Tax</div>
<div class="t" style="left:311.00px;top:493.67px;width:80px;text-align:center;font-size:8.25px;color:#222">10,338,608</div>
<div class="t" style="left:394.48px;top:493.67px;width:80px;text-align:center;font-size:8.25px;color:#222">10,283,903</div>
<div class="t" style="left:477.96px;top:493.67px;width:80px;text-align:center;font-size:8.25px;color:#222">9,874,736</div>
<div class="t" style="left:561.44px;top:493.67px;width:80px;text-align:center;font-size:8.25px;color:#222">9,614,171</div>
<div class="t" style="left:644.92px;top:493.67px;width:80px;text-align:center;font-size:8.25px;color:#222">9,589,057</div>
<div class="t" style="left:728.40px;top:493.67px;width:80px;text-align:center;font-size:8.25px;color:#222">12,441,805</div>
<div class="t" style="left:811.88px;top:493.67px;width:80px;text-align:center;font-size:8.25px;color:#222">12,420,253</div>
<div class="t" style="left:895.36px;top:493.67px;width:80px;text-align:center;font-size:8.25px;color:#222">12,398,303</div>
<div class="a" style="left:308.6px;top:377.40px;width:679px;height:1px;background:#555"></div>
<div class="a" style="left:308.6px;top:427.20px;width:679px;height:1px;background:#555"></div>
<div class="a" style="left:308.6px;top:452.10px;width:679px;height:1px;background:#555"></div>
<div class="a" style="left:308.6px;top:464.55px;width:679px;height:1px;background:#555"></div>
<div class="a" style="left:308.6px;top:501.90px;width:679px;height:1px;background:#555"></div>
<div class="a" style="left:987px;top:51px;width:13px;height:508px;background:#f0f0f0"></div>
<svg class="a" style="left:987px;top:51px" width="13" height="508"><path d="M3.5 7.5 L6.5 3.5 L9.5 7.5 Z" fill="#606060"/><rect x="4" y="12" width="6" height="474" rx="3" fill="#6b6b6b"/><path d="M3.5 502 L6.5 506 L9.5 502 Z" fill="#606060"/></svg>
<div class="a" style="left:0;top:559px;width:1000px;height:18px;background:#e9e9ec"></div>
<svg class="a" style="left:0;top:559px" width="80" height="18"><g fill="none" stroke="#888" stroke-width="0.9"><path d="M20.5 6 L17.5 9 L20.5 12" stroke="#666"/><path d="M37.5 6 L40.5 9 L37.5 12"/></g><g fill="#333"><circle cx="57.5" cy="9" r="0.9"/><circle cx="60" cy="9" r="0.9"/><circle cx="62.5" cy="9" r="0.9"/></g></svg>
<div class="a" style="left:73.75px;top:560.2px;width:77.50px;height:16px;background:#fbfb9a"></div>
<div class="t" style="left:80px;top:564.96px;font-size:9.50px;color:#222;transform:scaleX(0.905);transform-origin:0 0">General Ex 2045</div>
<div class="a" style="left:157px;top:560.2px;width:71.75px;height:16px;background:#f9f9c9"></div>
<div class="t" style="left:162.5px;top:564.96px;font-size:9.50px;color:#222;transform:scaleX(0.931);transform-origin:0 0">Summary 2045</div>
<div class="a" style="left:232.7px;top:560.2px;width:104.10px;height:16px;background:#ffffff"></div>
<div class="t" style="left:241.4px;top:564.96px;font-size:9.50px;color:#222;transform:scaleX(0.962);transform-origin:0 0">Working Capitol 2045</div>
<div class="a" style="left:342px;top:560.2px;width:61.00px;height:16px;background:#fbfb9a"></div>
<div class="t" style="left:347.6px;top:564.96px;font-size:9.50px;color:#222;transform:scaleX(0.854);transform-origin:0 0">CAPEX 2045</div>
<div class="t" style="left:415px;top:564.96px;font-size:9.50px;color:#222;transform:scaleX(0.935);transform-origin:0 0">Key Metrics Charts</div>
<div class="a" style="left:502.2px;top:560.2px;width:95.80px;height:16px;background:#fbfb9a"></div>
<div class="t" style="left:507.6px;top:564.96px;font-size:9.50px;color:#222;transform:scaleX(0.926);transform-origin:0 0">Salaries Assumptions</div>
<div class="t" style="left:610.3px;top:564.96px;font-size:9.50px;color:#222;transform:scaleX(0.913);transform-origin:0 0">Sales Summary Charts</div>
<div class="t" style="left:717px;top:564.96px;font-size:9.50px;color:#222;transform:scaleX(0.914);transform-origin:0 0">KPI Charts</div>
<div class="a" style="left:802.5px;top:560.2px;width:47.50px;height:16px;background:#fbfb9a"></div>
<div class="t" style="left:808.75px;top:564.96px;font-size:9.50px;color:#222;transform:scaleX(0.869);transform-origin:0 0">Expenses</div>
<div class="a" style="left:770px;top:559.5px;width:27px;height:17px;background:#f4f6f6"></div>
<div class="t" style="left:776px;top:562.98px;font-size:9px;font-weight:bold;color:#2a2630;transform:scaleX(0.816);transform-origin:0 0">BEA</div>
<div class="a" style="left:775.5px;top:573.8px;width:16px;height:1.3px;background:#2f8a6c"></div>
<div class="a" style="left:856.25px;top:560.5px;width:23.75px;height:16px;background:#fbfb9a;overflow:hidden"><div class="t" style="left:6.25px;top:5px;font-size:8.7px;color:#222">COGS</div></div>
<svg class="a" style="left:880px;top:559px" width="120" height="18"><g fill="#333"><circle cx="8.5" cy="9.5" r="0.8"/><circle cx="11.5" cy="9.5" r="0.8"/><circle cx="14.5" cy="9.5" r="0.8"/></g>
<g stroke="#333" stroke-width="1"><line x1="27" y1="9" x2="35" y2="9"/><line x1="31" y1="5" x2="31" y2="13"/></g>
<g fill="#555"><circle cx="52" cy="5.5" r="0.8"/><circle cx="52" cy="9" r="0.8"/><circle cx="52" cy="12.5" r="0.8"/></g>
<path d="M69.5 7 L66.5 9 L69.5 11 Z" fill="#555"/><rect x="74" y="6.5" width="11" height="5" rx="2.5" fill="#6b6b6b"/><path d="M101 7 L104 9 L101 11 Z" fill="#555"/>
</svg>
<div class="a" style="left:0;top:577px;width:1000px;height:15px;background:#f3f3f3"></div>
<div class="t" style="left:8px;top:583.8px;font-size:6.7px;color:#555">Ready</div>
<svg class="a" style="left:36px;top:580.5px" width="40" height="13"><g fill="none" stroke="#555" stroke-width="0.9"><rect x="4.5" y="2.5" width="8" height="7"/><line x1="4.5" y1="5" x2="12.5" y2="5"/><circle cx="10" cy="7.5" r="1.6"/></g>
<g fill="none" stroke="#555" stroke-width="0.9"><path d="M25 3 H32"/><circle cx="28.5" cy="5" r="1"/><path d="M26 10 L28.5 6 L31 10"/></g></svg>
<div class="t" style="left:72.5px;top:584.5px;font-size:6.6px;font-weight:bold;color:#333">Accessibility: Investigate</div>
<div class="a" style="left:808.75px;top:578px;width:22.5px;height:14px;background:#e6e6e6"></div>
<svg class="a" style="left:800px;top:579px" width="200" height="15"><g fill="none" stroke="#555" stroke-width="0.8">
<rect x="14.5" y="3.5" width="8" height="8"/><line x1="14.5" y1="6.2" x2="22.5" y2="6.2"/><line x1="14.5" y1="8.8" x2="22.5" y2="8.8"/><line x1="17.2" y1="3.5" x2="17.2" y2="11.5"/><line x1="19.8" y1="3.5" x2="19.8" y2="11.5"/>
<rect x="41.5" y="3.5" width="8" height="8"/><line x1="43.5" y1="3.5" x2="43.5" y2="11.5"/><line x1="47.5" y1="3.5" x2="47.5" y2="11.5"/>
<rect x="67.5" y="3.5" width="8" height="8"/><path d="M70.5 3.5 V8.5 H75.5"/>
</g>
<line x1="88" y1="8" x2="93" y2="8" stroke="#666" stroke-width="0.8"/>
<line x1="95" y1="8" x2="165" y2="8" stroke="#999" stroke-width="0.8"/>
<rect x="127.5" y="4.5" width="2.5" height="7" fill="#555"/>
<g stroke="#666" stroke-width="0.8"><line x1="164.5" y1="8" x2="169.5" y2="8"/><line x1="167" y1="5.5" x2="167" y2="10.5"/></g>
</svg>
<div class="t" style="left:978.5px;top:584.5px;font-size:6.6px;color:#444">100%</div>
</body></html>
